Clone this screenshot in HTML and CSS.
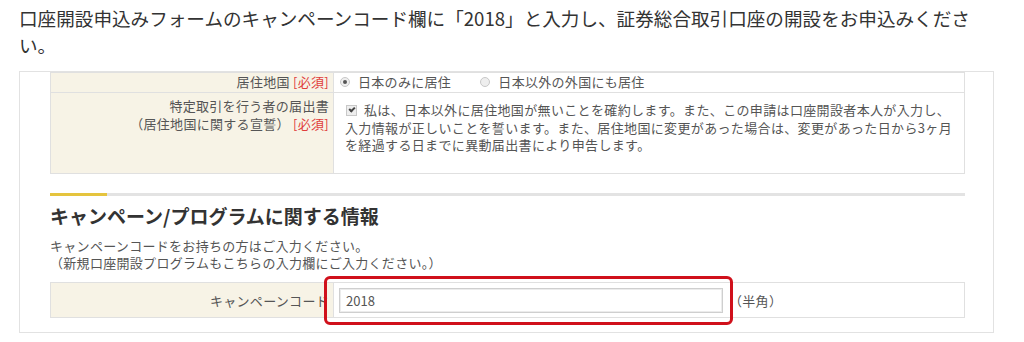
FILE: index.html
```html
<!DOCTYPE html>
<html lang="ja">
<head>
    <meta charset="UTF-8">
    <meta name="viewport" content="width=device-width, initial-scale=1.0">
    <title>キャンペーンコード入力</title>
    <link rel="stylesheet" href="styles.css">
</head>
<body>
    <p class="lead">口座開設申込みフォームのキャンペーンコード欄に「2018」と入力し、証券総合取引口座の開設をお申込みください。</p>

    <div class="panel">
        <table class="form-table">
            <tr class="row-country">
                <th>居住地国 <span class="req">[必須]</span></th>
                <td>
                    <label class="opt"><span class="radio checked"></span>日本のみに居住</label>
                    <label class="opt opt-far"><span class="radio"></span>日本以外の外国にも居住</label>
                </td>
            </tr>
            <tr class="row-oath">
                <th>特定取引を行う者の届出書<br>（居住地国に関する宣誓） <span class="req">[必須]</span></th>
                <td>
                    <p class="oath"><span class="check"></span>私は、日本以外に居住地国が無いことを確約します。また、この申請は口座開設者本人が入力し、<br>入力情報が正しいことを誓います。また、居住地国に変更があった場合は、変更があった日から3ヶ月<br>を経過する日までに異動届出書により申告します。</p>
                </td>
            </tr>
        </table>

        <div class="section">
            <div class="section-line"></div>
            <h2>キャンペーン/プログラムに関する情報</h2>
            <p class="note">キャンペーンコードをお持ちの方はご入力ください。<br>（新規口座開設プログラムもこちらの入力欄にご入力ください。）</p>
        </div>

        <table class="form-table code-table">
            <tr>
                <th>キャンペーンコード</th>
                <td>
                    <div class="code-field">
                        <input type="text" value="2018">
                        <span class="hint">（半角）</span>
                        <div class="highlight"></div>
                    </div>
                </td>
            </tr>
        </table>
    </div>
</body>
</html>
```

FILE: styles.css
```css
body {
    margin: 0;
    padding: 0;
    background: #fff;
    color: #333;
    font-family: "Noto Sans CJK JP", "Noto Sans", sans-serif;
}
.lead {
    margin: 4px 0 0;
    padding: 0 20px 0 19px;
    font-size: 18.6px;
    line-height: 27px;
    color: #333;
    height: 67px;
}
/* panel */
.panel {
    margin-left: 19px;
    width: 915px;
    padding: 0 28px 14px 30px;
    border: 1px solid #e2e2e2;
}
.form-table {
    width: 100%;
    table-layout: fixed;
    border-collapse: collapse;
    font-size: 13px;
    letter-spacing: 0.3px;
    color: #555;
}
.form-table th,
.form-table td {
    border: 1px solid #e0e0e0;
    vertical-align: top;
    font-weight: normal;
}
.form-table th {
    width: 270px;
    background: #f7f3e6;
    text-align: right;
    padding: 0 4px 0 8px;
}
.form-table td {
    padding: 0 8px;
    text-align: left;
}
.req {
    color: #e03c3c;
}
.row-country th,
.row-country td {
    height: 19px;
    line-height: 18px;
    padding-top: 0;
    padding-bottom: 0;
}
.row-country td {
    padding-left: 6px;
}
.opt {
    display: inline-flex;
    align-items: center;
}
.opt-far {
    margin-left: 26px;
}
.radio {
    width: 8px;
    height: 8px;
    border: 1px solid #c8c8c8;
    border-radius: 50%;
    background: #eee;
    margin-right: 8px;
    position: relative;
}
.radio.checked::after {
    content: "";
    position: absolute;
    left: 2px;
    top: 2px;
    width: 4px;
    height: 4px;
    border-radius: 50%;
    background: #555;
}
.row-oath th,
.row-oath td {
    height: 76px;
    line-height: 17.5px;
    padding-top: 4px;
}
.row-oath td {
    padding-left: 11px;
    padding-right: 8px;
    white-space: nowrap;
}
.oath {
    margin: 0;
    padding-top: 4px;
    letter-spacing: 0.35px;
}
.check {
    display: inline-block;
    width: 9px;
    height: 9px;
    border: 1px solid #c8c8c8;
    background: #eee;
    margin: 0 7px 0 1px;
    vertical-align: -1px;
    position: relative;
}
.check::after {
    content: "";
    position: absolute;
    left: 2px;
    top: 1px;
    width: 4px;
    height: 2px;
    border-left: 2px solid #444;
    border-bottom: 2px solid #444;
    transform: rotate(-45deg);
}
/* section */
.section {
    padding-top: 19px;
}
.section-line {
    height: 3px;
    background: linear-gradient(to right, #e5c43e 0, #e5c43e 57px, #e3e3e3 57px);
}
.section h2 {
    margin: 7px 0 0;
    font-size: 19px;
    line-height: 26px;
    font-weight: bold;
    color: #333;
}
.note {
    margin: 8px 0 0;
    font-size: 13px;
    letter-spacing: 0.3px;
    line-height: 17px;
    color: #555;
}
.code-table {
    margin-top: 11px;
}
.code-table th,
.code-table td {
    height: 34px;
    vertical-align: middle;
}
.code-table td {
    padding: 0 5px;
}
.code-field {
    position: relative;
    display: flex;
    align-items: center;
}
.code-field input {
    width: 370px;
    height: 23px;
    border: 1px solid #cfcfcf;
    box-shadow: inset 0 0 0 1px #ececec;
    padding: 0 6px;
    font-family: "Noto Sans CJK JP", sans-serif;
    font-size: 13px;
    color: #555;
    margin: 0;
}
.hint {
    margin-left: 6px;
    color: #555;
}
.highlight {
    position: absolute;
    left: -15px;
    top: -12px;
    width: 403px;
    height: 43px;
    border: 3px solid #d0101b;
    border-radius: 6px;
}
```
